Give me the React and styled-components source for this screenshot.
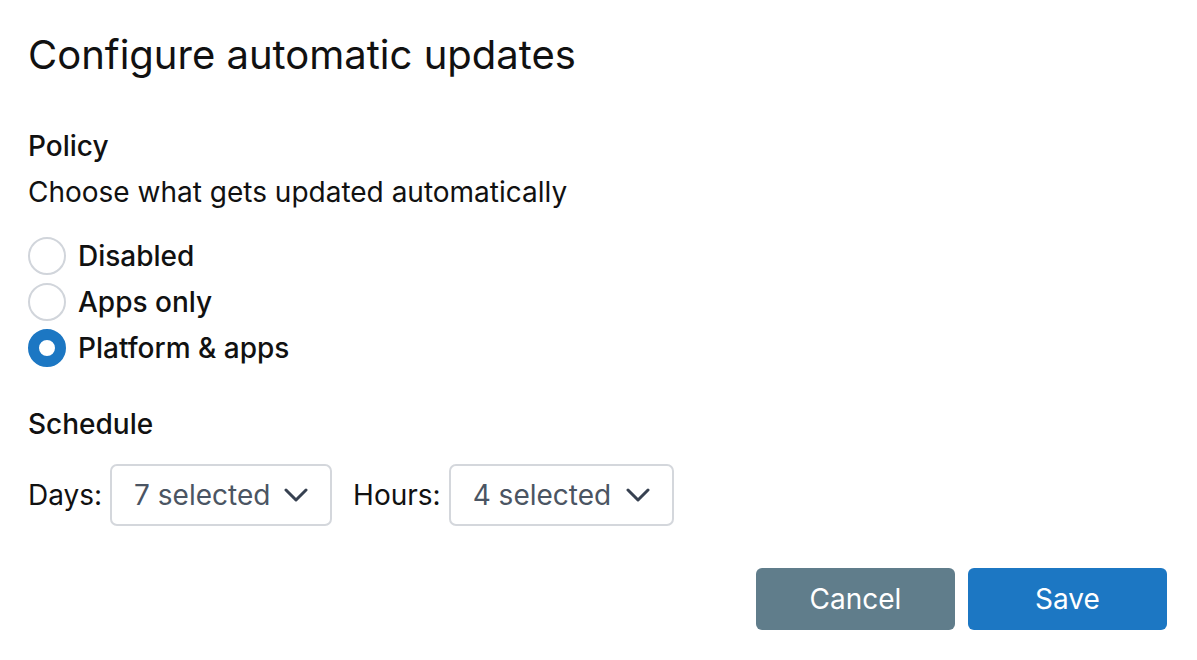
import React, { useState } from 'react';
import styled, { createGlobalStyle } from 'styled-components';

const GlobalStyle = createGlobalStyle`
  html, body {
    margin: 0;
    padding: 0;
    background: #ffffff;
  }
  body {
    font-family: Inter, "Noto Sans", "Liberation Sans", sans-serif;
    color: #111111;
  }
`;

const Dialog = styled.div`
  width: 1197px;
  box-sizing: border-box;
  padding: 32px 30px 30px 28px;
  display: flex;
  flex-direction: column;
`;

const Title = styled.h1`
  margin: 0;
  font-size: 40px;
  font-weight: 400;
  line-height: 46px;
  color: #111111;
`;

const SectionLabel = styled.div`
  font-size: 28px;
  line-height: 39px;
  font-weight: 500;
  margin-top: ${props => props.gap || 0}px;
`;

const Hint = styled.div`
  font-size: 28px;
  line-height: 39px;
  margin-top: 7px;
`;

const RadioGroup = styled.div`
  display: flex;
  flex-direction: column;
  margin-top: 21px;
`;

const RadioRow = styled.label`
  display: flex;
  align-items: center;
  gap: 12px;
  height: 46px;
  font-size: 28px;
  font-weight: 500;
  cursor: pointer;
`;

const RadioDot = styled.span`
  width: 38px;
  height: 38px;
  box-sizing: border-box;
  border-radius: 50%;
  flex-shrink: 0;
  border: ${props => props.checked ? '11px solid #1c77c3' : '2px solid #d1d5db'};
  background: #ffffff;
`;

const ScheduleRow = styled.div`
  display: flex;
  align-items: center;
  margin-top: 20px;
  font-size: 28px;
`;

const FieldLabel = styled.span`
  margin-right: 8px;
  margin-left: ${props => props.indent || 0}px;
`;

const Select = styled.button`
  display: flex;
  align-items: center;
  justify-content: space-between;
  width: ${props => props.w}px;
  height: 62px;
  box-sizing: border-box;
  padding: 0 22px 0 22px;
  border: 2px solid #d4d7dc;
  border-radius: 7px;
  background: #ffffff;
  font-family: inherit;
  font-size: 28px;
  color: #4b5563;
  cursor: pointer;
`;

const Footer = styled.div`
  display: flex;
  justify-content: flex-end;
  gap: 13px;
  margin-top: 42px;
`;

const Button = styled.button`
  width: 199px;
  height: 62px;
  border: none;
  border-radius: 6px;
  font-family: inherit;
  font-size: 28px;
  color: #ffffff;
  background: ${props => props.primary ? '#1c77c3' : '#607d8b'};
  cursor: pointer;
`;

function Chevron() {
  return (
    <svg width="24" height="14" viewBox="0 0 24 14" fill="none">
      <path d="M2 2l10 10 10-10" stroke="#374151" strokeWidth="3" strokeLinecap="round" strokeLinejoin="round" />
    </svg>
  );
}

const options = ['Disabled', 'Apps only', 'Platform & apps'];

export default function App() {
  const [policy, setPolicy] = useState(2);

  return (
    <>
      <GlobalStyle />
      <Dialog>
        <Title>Configure automatic updates</Title>

        <SectionLabel gap={49}>Policy</SectionLabel>
        <Hint>Choose what gets updated automatically</Hint>
        <RadioGroup>
          {options.map((opt, i) => (
            <RadioRow key={opt} onClick={() => setPolicy(i)}>
              <RadioDot checked={policy === i} />
              {opt}
            </RadioRow>
          ))}
        </RadioGroup>

        <SectionLabel gap={34}>Schedule</SectionLabel>
        <ScheduleRow>
          <FieldLabel>Days:</FieldLabel>
          <Select w={222}>7 selected <Chevron /></Select>
          <FieldLabel indent={21}>Hours:</FieldLabel>
          <Select w={225}>4 selected <Chevron /></Select>
        </ScheduleRow>

        <Footer>
          <Button>Cancel</Button>
          <Button primary>Save</Button>
        </Footer>
      </Dialog>
    </>
  );
}
